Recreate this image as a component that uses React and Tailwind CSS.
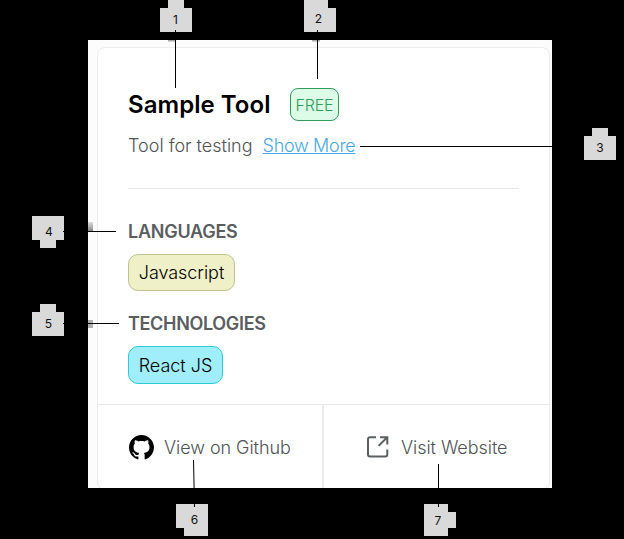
import React from "react";

const callouts = [
  { n: "1", x: 175.5, y: 24, shape: "M168 0h16v8h8v24h-32V8h8z" },
  { n: "2", x: 318.5, y: 23, shape: "M304 0h24v8h8v24h-32z" },
  { n: "3", x: 600, y: 152, shape: "M592 128h16v8h8v24h-32v-24h8z" },
  { n: "4", x: 49, y: 236, shape: "M32 216h32v24h-8v8h-16v-8h-8z" },
  { n: "5", x: 48.5, y: 328, shape: "M40 304h16v8h8v24h-32v-24h8z" },
  { n: "6", x: 194.5, y: 524, shape: "M176 504h32v32h-24v-8h-8z" },
  { n: "7", x: 438, y: 525, shape: "M424 504h24v8h8v16h-8v8h-24z" },
];

function Callouts() {
  return (
    <svg className="pointer-events-none absolute inset-0" width="624" height="539">
      <defs>
        <linearGradient id="smudge" x1="0" y1="0" x2="0" y2="1">
          <stop offset="0" stopColor="#ddd" />
          <stop offset="1" stopColor="#888" />
        </linearGradient>
      </defs>
      <rect x="88" y="222" width="5" height="9" fill="url(#smudge)" />
      <rect x="88" y="320" width="5" height="8" fill="#b0b0b0" />
      <path d="M168 40h8v1.5h-8zM312 40h8v1.5h-8z" fill="#aaa" />
      {callouts.map((c) => (
        <g key={c.n}>
          <path d={c.shape} fill="#d9d9d9" />
          <text x={c.x} y={c.y} textAnchor="middle" fontSize="12" fontWeight="400" fill="#111" fontFamily="Inter, sans-serif">
            {c.n}
          </text>
        </g>
      ))}
      <path
        d="M175.5 30V88M317.5 30V79M360 146.5H552M63 231.5H116M63 323.5H119M438.5 464V507M193.5 460L194.5 507"
        stroke="#000"
        fill="none"
      />
    </svg>
  );
}

function GithubIcon() {
  return (
    <svg className="mb-0.5" width="25" height="25" viewBox="0 0 16 16" fill="#000">
      <path d="M8 0C3.58 0 0 3.58 0 8c0 3.54 2.29 6.53 5.47 7.59.4.07.55-.17.55-.38 0-.19-.01-.82-.01-1.49-2.01.37-2.53-.49-2.69-.94-.09-.23-.48-.94-.82-1.13-.28-.15-.68-.52-.01-.53.63-.01 1.08.58 1.23.82.72 1.21 1.87.87 2.33.66.07-.52.28-.87.51-1.07-1.78-.2-3.64-.89-3.64-3.95 0-.87.31-1.59.82-2.15-.08-.2-.36-1.02.08-2.12 0 0 .67-.21 2.2.82.64-.18 1.32-.27 2-.27s1.36.09 2 .27c1.53-1.04 2.2-.82 2.2-.82.44 1.1.16 1.92.08 2.12.51.56.82 1.27.82 2.15 0 3.07-1.87 3.75-3.65 3.95.29.25.54.73.54 1.48 0 1.07-.01 1.93-.01 2.2 0 .21.15.46.55.38A8.01 8.01 0 0 0 16 8c0-4.42-3.58-8-8-8z" />
    </svg>
  );
}

function LinkIcon() {
  return (
    <svg className="mb-0.5" width="22" height="22" viewBox="0 0 22 22" fill="none" stroke="#5c5f62" strokeWidth="2">
      <path d="M9 1.2H3a2 2 0 0 0-2 2v15.3a2 2 0 0 0 2 2h15.3a2 2 0 0 0 2-2V13.5M13 1.2h7.3v7.3M20 1.5l-8.4 8.4" />
    </svg>
  );
}

export default function App() {
  return (
    <div className="relative h-[539px] w-[624px] overflow-hidden bg-black pt-10 pl-[88px] font-['Inter',sans-serif] text-lg font-light text-[#505355]">
      <main className="h-[448px] w-[464px] overflow-hidden bg-[#fcfcfc] pt-[7px] pl-[9px]">
        <article className="flex h-[443px] w-[453px] flex-col rounded-lg border border-[#ececec] bg-white">
          <div className="flex h-[356px] shrink-0 flex-col items-start pt-10 pr-[30px] pl-[30px]">
            <div className="flex h-[33px] items-center">
              <h1 className="w-[162px] pt-px text-2xl font-semibold tracking-[0.05px] whitespace-nowrap text-black">Sample Tool</h1>
              <span className="flex h-[33px] w-[49px] items-center justify-center rounded-lg border border-[#2f9e5b] bg-[#dcfce7] text-base tracking-[-0.2px] text-[#2f9e5b]">FREE</span>
            </div>
            <p className="mt-[11px] flex h-7 gap-[10px] leading-7 whitespace-nowrap">
              <span>Tool for testing</span>
              <a className="tracking-[-0.3px] text-[#4aa9e0] underline">Show More</a>
            </p>
            <div className="mt-7 h-px w-full bg-[#e5e7eb]" />
            <h2 className="mt-[29px] h-7 leading-7 font-semibold tracking-[-0.25px] whitespace-nowrap text-[#5a5d60]">LANGUAGES</h2>
            <span className="mt-2 flex h-[37px] w-[107px] items-center justify-center rounded-[10px] border border-[#bfc18f] bg-[#f0f0c8] tracking-[-0.05px] text-black">Javascript</span>
            <h2 className="mt-[19px] h-7 leading-7 font-semibold tracking-[-0.33px] whitespace-nowrap text-[#5a5d60]">TECHNOLOGIES</h2>
            <span className="mt-2 flex h-[38px] w-[95px] items-center justify-center rounded-[10px] border border-[#2bcbdc] bg-[#a0edfc] pt-px text-black">React JS</span>
          </div>
          <footer className="flex h-[87px] shrink-0 border-t border-[#e5e7eb]">
            <div className="flex h-[86px] w-[226px] items-center gap-[10px] border-r-2 border-[#ececee] pl-[31px] tracking-[-0.05px] whitespace-nowrap">
              <GithubIcon />
              <span>View on Github</span>
            </div>
            <div className="flex h-[86px] flex-1 items-center gap-3 pl-[43px] tracking-[-0.05px] whitespace-nowrap">
              <LinkIcon />
              <span>Visit Website</span>
            </div>
          </footer>
        </article>
      </main>
      <Callouts />
    </div>
  );
}
